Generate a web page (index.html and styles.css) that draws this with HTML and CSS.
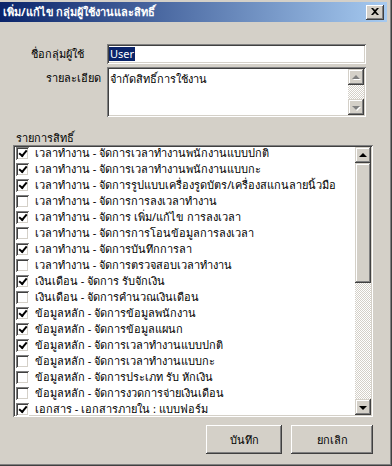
FILE: index.html
```html
<!DOCTYPE html>
<html lang="th">
<head>
<meta charset="utf-8">
<link rel="stylesheet" href="styles.css">
</head>
<body>
<div class="window">
  <div class="titlebar">
    <span class="title">เพิ่ม/แก้ไข กลุ่มผู้ใช้งานและสิทธิ์</span>
    <div class="close"><svg width="8" height="7" viewBox="0 0 8 7"><path d="M0 0h2l2 2 2-2h2L5 3.5 8 7H6L4 5 2 7H0l3-3.5z" fill="#000"/></svg></div>
  </div>
  <div class="content">
    <div class="form">
      <label class="lbl lbl-name">ชื่อกลุ่มผู้ใช้</label>
      <div class="field input"><span class="sel">User</span></div>
      <label class="lbl lbl-desc">รายละเอียด</label>
      <div class="field textarea">
        <div class="ta-text">จำกัดสิทธิ์การใช้งาน</div>
        <div class="vscroll small">
          <div class="sbtn"><span class="arr up dis"></span></div>
          <div class="track"></div>
          <div class="sbtn"><span class="arr down dis"></span></div>
        </div>
      </div>
    </div>
    <div class="list-label">รายการสิทธิ์</div>
    <div class="listbox">
      <ul class="rows">
        <li><span class="cb on"></span>เวลาทำงาน - จัดการเวลาทำงานพนักงานแบบปกติ</li>
        <li><span class="cb on"></span>เวลาทำงาน - จัดการเวลาทำงานพนักงานแบบกะ</li>
        <li><span class="cb on"></span>เวลาทำงาน - จัดการรูปแบบเครื่องรูดบัตร/เครื่องสแกนลายนิ้วมือ</li>
        <li><span class="cb"></span>เวลาทำงาน - จัดการการลงเวลาทำงาน</li>
        <li><span class="cb on"></span>เวลาทำงาน - จัดการ เพิ่ม/แก้ไข การลงเวลา</li>
        <li><span class="cb"></span>เวลาทำงาน - จัดการการโอนข้อมูลการลงเวลา</li>
        <li><span class="cb on"></span>เวลาทำงาน - จัดการบันทึกการลา</li>
        <li><span class="cb"></span>เวลาทำงาน - จัดการตรวจสอบเวลาทำงาน</li>
        <li><span class="cb on"></span>เงินเดือน - จัดการ รับจักเงิน</li>
        <li><span class="cb"></span>เงินเดือน - จัดการคำนวณเงินเดือน</li>
        <li><span class="cb on"></span>ข้อมูลหลัก - จัดการข้อมูลพนักงาน</li>
        <li><span class="cb on"></span>ข้อมูลหลัก - จัดการข้อมูลแผนก</li>
        <li><span class="cb on"></span>ข้อมูลหลัก - จัดการเวลาทำงานแบบปกติ</li>
        <li><span class="cb"></span>ข้อมูลหลัก - จัดการเวลาทำงานแบบกะ</li>
        <li><span class="cb"></span>ข้อมูลหลัก - จัดการประเภท รับ หักเงิน</li>
        <li><span class="cb"></span>ข้อมูลหลัก - จัดการงวดการจ่ายเงินเดือน</li>
        <li><span class="cb on"></span>เอกสาร - เอกสารภายใน : แบบฟอร์ม</li>
      </ul>
      <div class="vscroll big">
        <div class="sbtn"><span class="arr up"></span></div>
        <div class="thumb"></div>
        <div class="track"></div>
        <div class="sbtn"><span class="arr down"></span></div>
      </div>
    </div>
    <div class="buttons">
      <button class="btn btn-save">บันทึก</button>
      <button class="btn btn-cancel">ยกเลิก</button>
    </div>
  </div>
</div>
</body>
</html>
```
FILE: styles.css
```css
* { box-sizing: border-box; }
html, body { margin: 0; padding: 0; }
body {
  width: 392px;
  height: 466px;
  overflow: hidden;
  background: #d4d0c8;
  font-family: "Noto Sans", "DejaVu Sans", sans-serif;
  font-size: 11px;
  color: #000;
}
.window {
  width: 392px;
  height: 466px;
  background: #d4d0c8;
  padding-top: 2px;
  border-right: 1px solid #404040;
  border-bottom: 1px solid #404040;
  box-shadow: inset -1px -1px #808080;
}
.titlebar {
  height: 20px;
  margin-right: 4px;
  background: linear-gradient(to right, #0a246a, #a6caf0);
  display: flex;
  align-items: center;
  justify-content: space-between;
  padding: 0 3px 0 3px;
}
.title {
  color: #fff;
  font-weight: bold;
  font-size: 11px;
  white-space: nowrap;
}
.close {
  width: 18px;
  height: 15px;
  background: #d4d0c8;
  box-shadow: inset -1px -1px #404040, inset 1px 1px #fff, inset -2px -2px #808080, inset 2px 2px #d4d0c8;
  display: flex;
  align-items: center;
  justify-content: center;
  padding-bottom: 1px;
}
.content { padding-top: 22px; }
.form {
  display: grid;
  grid-template-columns: 107px 259px;
  grid-template-rows: 20px 50px;
  row-gap: 3px;
}
.lbl { white-space: nowrap; }
.lbl-name { align-self: center; justify-self: end; padding-right: 23px; }
.lbl-desc { justify-self: end; padding-right: 6px; padding-top: 2px; }
.field {
  background: #fff;
  box-shadow: inset 1px 1px #808080, inset -1px -1px #fff, inset 2px 2px #404040, inset -2px -2px #d4d0c8;
  padding: 2px;
}
.input { display: flex; align-items: center; padding-left: 2px; }
.sel { background: #0a246a; color: #fff; padding: 0 1px; line-height: 14px; }
.textarea { display: flex; }
.ta-text { flex: 1; padding: 1px 0 0 1px; }
.vscroll { width: 16px; display: flex; flex-direction: column; }
.vscroll.small { height: 46px; }
.sbtn {
  width: 16px;
  height: 16px;
  flex: none;
  background: #d4d0c8;
  box-shadow: inset -1px -1px #404040, inset 1px 1px #d4d0c8, inset -2px -2px #808080, inset 2px 2px #fff;
  display: flex;
  align-items: center;
  justify-content: center;
}
.track {
  flex: 1;
  background: repeating-conic-gradient(#fff 0 25%, #d4d0c8 0 50%) 0 0 / 2px 2px;
}
.thumb {
  height: 120px;
  flex: none;
  background: #d4d0c8;
  box-shadow: inset -1px -1px #404040, inset 1px 1px #d4d0c8, inset -2px -2px #808080, inset 2px 2px #fff;
}
.arr { width: 0; height: 0; border-left: 4px solid transparent; border-right: 4px solid transparent; }
.arr.up { border-bottom: 4px solid #000; margin-top: -1px; }
.arr.down { border-top: 4px solid #000; margin-top: 1px; }
.arr.up.dis { border-bottom-color: #808080; filter: drop-shadow(1px 1px 0 #fff); }
.arr.down.dis { border-top-color: #808080; filter: drop-shadow(1px 1px 0 #fff); }
.list-label { margin: 12px 0 0 16px; height: 16px; }
.listbox {
  margin-left: 13px;
  width: 360px;
  height: 272px;
  background: #fff;
  box-shadow: inset 1px 1px #808080, inset -1px -1px #fff, inset 2px 2px #404040, inset -2px -2px #d4d0c8;
  padding: 0 2px;
  display: flex;
}
.rows { list-style: none; margin: 0; padding: 0; flex: 1; overflow: hidden; height: 272px; }
.rows li {
  height: 16px;
  display: flex;
  align-items: center;
  white-space: nowrap;
  padding-left: 1px;
}
.cb {
  width: 13px;
  height: 13px;
  flex: none;
  margin-right: 6px;
  background: #fff;
  box-shadow: inset 1px 1px #808080, inset -1px -1px #fff, inset 2px 2px #404040, inset -2px -2px #d4d0c8;
  position: relative;
}
.cb.on::after {
  content: "";
  position: absolute;
  left: 3px;
  top: 3px;
  width: 6px;
  height: 3px;
  border-left: 2px solid #000;
  border-bottom: 2px solid #000;
  transform: rotate(-50deg);
}
.vscroll.big { height: 268px; margin-top: 2px; }
.buttons {
  display: flex;
  justify-content: flex-end;
  gap: 9px;
  margin: 8px 18px 0 0;
}
.btn {
  font-family: inherit;
  font-size: 11px;
  height: 29px;
  border: none;
  background: #d4d0c8;
  box-shadow: inset -1px -1px #404040, inset 1px 1px #fff, inset -2px -2px #808080, inset 2px 2px #d4d0c8;
  padding: 0;
  color: #000;
}
.btn-save { width: 76px; }
.btn-cancel { width: 82px; }
```
